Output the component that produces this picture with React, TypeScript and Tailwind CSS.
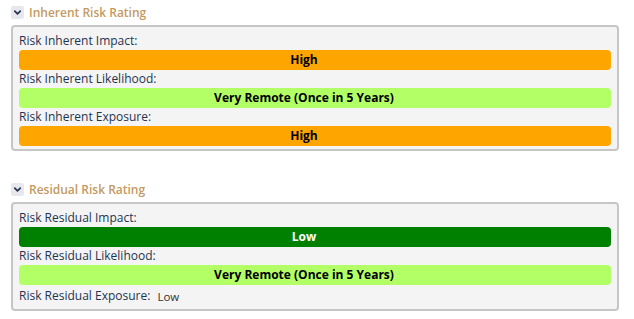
import { ChevronDown } from "lucide-react";

type Row = { label: string; value: string; tone?: "orange" | "lime" | "green" | "plain" };

const inherent: Row[] = [
  { label: "Risk Inherent Impact:", value: "High", tone: "orange" },
  { label: "Risk Inherent Likelihood:", value: "Very Remote (Once in 5 Years)", tone: "lime" },
  { label: "Risk Inherent Exposure:", value: "High", tone: "orange" },
];

const residual: Row[] = [
  { label: "Risk Residual Impact:", value: "Low", tone: "green" },
  { label: "Risk Residual Likelihood:", value: "Very Remote (Once in 5 Years)", tone: "lime" },
  { label: "Risk Residual Exposure:", value: "Low", tone: "plain" },
];

const toneClass = {
  orange: "bg-[#ffa500] text-black",
  lime: "bg-[#b3ff66] text-black",
  green: "bg-[#008000] text-white",
};

function Section({ title, rows }: { title: string; rows: Row[] }) {
  return (
    <div>
      <div className="flex items-center h-[13px] pl-[11px]">
        <span className="flex items-center justify-center w-[13px] h-[13px] rounded-[2px] bg-[#e6e8ee] text-[#263150]">
          <ChevronDown size={11} strokeWidth={3.5} />
        </span>
        <span className="ml-[5px] text-[12px] font-semibold text-[#c39a62]">{title}</span>
      </div>
      <div className="mt-[6px] ml-[11px] w-[608px] rounded-[4px] border-2 border-[#c6c6c6] bg-[#f4f4f4] px-[6px] pt-[5px] pb-[3px]">
        {rows.map((row) =>
          row.tone === "plain" ? (
            <div key={row.label} className="flex items-center h-[21px] text-[12px] text-[#1d3550]">
              <span>{row.label}</span>
              <span className="ml-[7px] text-[11.5px] text-[#333] translate-y-[1px]">{row.value}</span>
            </div>
          ) : (
            <div key={row.label}>
              <div className="h-[18px] leading-[18px] text-[12px] text-[#1d3550]">{row.label}</div>
              <div
                className={`h-[20px] rounded-[4px] flex items-center justify-center pr-[22px] text-[12px] font-bold ${toneClass[row.tone!]}`}
              >
                {row.value}
              </div>
            </div>
          )
        )}
      </div>
    </div>
  );
}

export default function App() {
  return (
    <div className="w-[634px] h-[319px] bg-white pt-[6px] flex flex-col gap-[32px]" style={{ fontFamily: '"Open Sans", sans-serif' }}>
      <Section title="Inherent Risk Rating" rows={inherent} />
      <Section title="Residual Risk Rating" rows={residual} />
    </div>
  );
}
